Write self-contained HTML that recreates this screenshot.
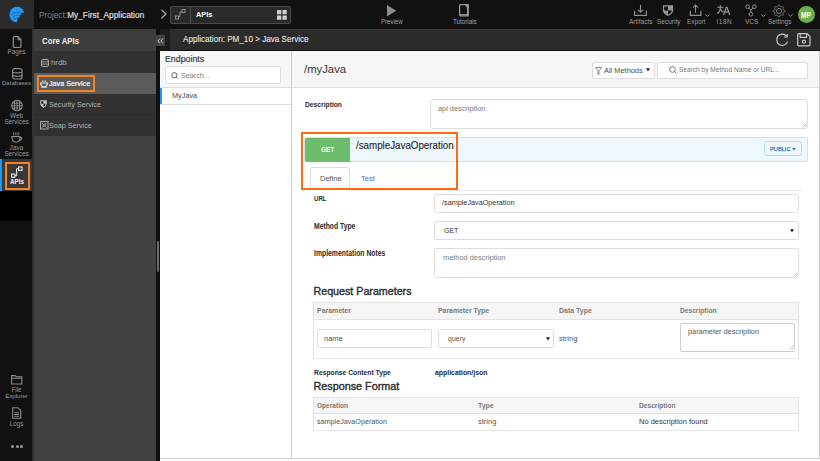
<!DOCTYPE html>
<html><head><meta charset="utf-8">
<style>
*{margin:0;padding:0;box-sizing:border-box}
html,body{width:820px;height:461px;overflow:hidden;background:#fff;font-family:"Liberation Sans",sans-serif}
.a{position:absolute}
.t{position:absolute;white-space:nowrap;line-height:1}
svg{position:absolute;overflow:visible}
</style></head><body>

<!-- top bar -->
<div class="a" style="left:0;top:0;width:820px;height:29px;background:#111"></div>
<div class="a" style="left:0;top:0;width:34px;height:29px;background:#2b2b2b"></div>
<svg style="left:0;top:0" width="34" height="29" viewBox="0 0 34 29"><path d="M17.2 22.2 Q12.5 22.5 10.3 18.6 Q8.6 15 10.2 11.2 Q12.2 7 16.8 6.8 Q21.4 6.8 23.9 11.2 L24 12.6 L20.9 13 L21.9 14.4 L19.3 15.2 L20.1 16.7 L17.6 17.9 Z" fill="#2196f3"/><path d="M11.2 14.6 Q14.5 11.4 20.9 13 M12.4 17.6 Q15.2 14.4 19.3 15.2 M14 20.4 Q15.4 17.4 17.6 17.9" fill="none" stroke="#166ab8" stroke-width="0.9"/></svg>
<div class="t" style="left:39px;top:10.6px;font-size:8.3px;color:#808080">Project:<span style="color:#e0e0e0;-webkit-text-stroke:0.15px #e0e0e0">My_First_Application</span></div>
<svg style="left:160px;top:9px" width="8" height="10" viewBox="0 0 8 10"><path d="M1.5 0.8 L6 5 L1.5 9.2" fill="none" stroke="#aaa" stroke-width="1.3"/></svg>

<div class="a" style="left:170px;top:6px;width:121px;height:18px;border:1px solid #4a4a4a;border-radius:2px;background:#2a2a2a"></div>
<div class="a" style="left:190px;top:7px;width:1px;height:16px;background:#4a4a4a"></div>
<svg style="left:175px;top:9px" width="11" height="11" viewBox="0 0 11 11"><rect x="0.5" y="7" width="3" height="3" fill="none" stroke="#999" stroke-width="0.9"/><rect x="7" y="0.5" width="3" height="3" fill="none" stroke="#999" stroke-width="0.9"/><path d="M3.5 7.5 L5 7.5 L5 3 L7 3" fill="none" stroke="#999" stroke-width="0.9"/></svg>
<div class="t" style="left:196px;top:11px;font-size:7.3px;font-weight:bold;color:#fff">APIs</div>
<svg style="left:277px;top:10px" width="10" height="10" viewBox="0 0 10 10"><path d="M0 0 H4.3 V4.3 H0Z M5.5 0 H9.8 V4.3 H5.5Z M0 5.5 H4.3 V9.8 H0Z M5.5 5.5 H9.8 V9.8 H5.5Z" fill="#cfcfcf"/></svg>

<!-- preview / tutorials -->
<svg style="left:387px;top:4.8px" width="10" height="12" viewBox="0 0 10 12"><path d="M0 0 L9.2 5.7 L0 11.4Z" fill="#8c8c8c"/></svg>
<div class="t" style="left:381px;top:18.5px;font-size:6.8px;color:#a4a4a4;transform:scaleX(0.89);transform-origin:0 0">Preview</div>
<svg style="left:459px;top:4px" width="11" height="13" viewBox="0 0 11 13"><path d="M0.6 1.4 Q0.6 0.6 1.4 0.6 L6.3 0.6 L7.8 2.3 L7.8 0.6 L9.2 0.6 L9.2 12 L1.4 12 Q0.6 12 0.6 11.2Z" fill="none" stroke="#9a9a9a" stroke-width="1.2"/><path d="M1 10.9 L9 10.9" stroke="#9a9a9a" stroke-width="1.6"/><path d="M8.6 1 L8.6 11.5" stroke="#9a9a9a" stroke-width="1.3"/></svg>
<div class="t" style="left:453px;top:18.5px;font-size:6.8px;color:#a4a4a4;transform:scaleX(0.92);transform-origin:0 0">Tutorials</div>

<!-- right toolbar -->

<!-- toolbar icons -->
<svg style="left:633px;top:4px" width="15" height="13" viewBox="0 0 15 13"><path d="M7.5 0.8 L7.5 8.2 M5 5.8 L7.5 8.3 L10 5.8" fill="none" stroke="#8e8e8e" stroke-width="1.1"/><path d="M1.6 6.8 L1.6 11.4 L13.4 11.4 L13.4 6.8" fill="none" stroke="#8e8e8e" stroke-width="1.2"/></svg>
<svg style="left:662px;top:4px" width="12" height="13" viewBox="0 0 12 13"><path d="M0.9 1.2 L11.1 1.2 L11.1 6 Q11 10 6 12 Q1 10 0.9 6Z" fill="#969696"/><path d="M2.2 2.5 L6 2.5 L6 6.6 L2.2 6.6Z M6 6.6 L9.8 6.6 Q9.5 9.4 6 10.8Z" fill="#111"/></svg>
<svg style="left:689px;top:4px" width="14" height="13" viewBox="0 0 14 13"><path d="M6.5 8.8 L6.5 1.2 M4 3.6 L6.5 1.1 L9 3.6" fill="none" stroke="#8e8e8e" stroke-width="1.1"/><path d="M1.3 6.8 L1.3 11.4 L11.9 11.4 L11.9 6.8" fill="none" stroke="#8e8e8e" stroke-width="1.2"/></svg>
<svg style="left:704px;top:13px" width="7" height="5" viewBox="0 0 7 5"><path d="M1.2 1.4 L3.4 3.5 L5.6 1.4" fill="none" stroke="#8e8e8e" stroke-width="0.9"/></svg>
<svg style="left:716px;top:4px" width="15" height="12" viewBox="0 0 15 12"><path d="M1.2 3.3 L7.4 3.3 M4.3 1 L4.3 4.5 Q4 8 1.2 9.5 M4.4 5 Q5.5 7.6 7.8 8.3" fill="none" stroke="#969696" stroke-width="1.1"/><path d="M7.6 11 L10.3 3.3 L11 3.3 L13.7 11 M8.6 8.2 L12.7 8.2" fill="none" stroke="#969696" stroke-width="1.2"/></svg>
<svg style="left:744px;top:3px" width="14" height="14" viewBox="0 0 14 14"><circle cx="3.6" cy="3.7" r="1.9" fill="none" stroke="#8e8e8e" stroke-width="1"/><circle cx="10.3" cy="3.7" r="1.9" fill="none" stroke="#8e8e8e" stroke-width="1"/><circle cx="6.9" cy="11.2" r="1.9" fill="none" stroke="#8e8e8e" stroke-width="1"/><path d="M4.8 5.2 L6.9 6.8 L9.1 5.2 M6.9 6.8 L6.9 9.3" fill="none" stroke="#8e8e8e" stroke-width="1"/></svg>
<svg style="left:759.5px;top:13px" width="7" height="5" viewBox="0 0 7 5"><path d="M1.2 1.4 L3.4 3.5 L5.6 1.4" fill="none" stroke="#8e8e8e" stroke-width="0.9"/></svg>
<svg style="left:772px;top:4px" width="14" height="14" viewBox="-7 -7 14 14"><path d="M5.96 0.00 L5.95 0.16 L5.92 0.31 L5.86 0.46 L5.77 0.61 L5.66 0.74 L5.51 0.87 L5.31 0.98 L4.89 1.04 L4.69 1.13 L4.54 1.22 L4.41 1.31 L4.30 1.40 L4.22 1.49 L4.15 1.59 L4.10 1.70 L4.06 1.81 L4.04 1.93 L4.03 2.05 L4.04 2.19 L4.07 2.35 L4.11 2.52 L4.20 2.72 L4.45 3.06 L4.51 3.28 L4.53 3.47 L4.51 3.65 L4.47 3.81 L4.40 3.96 L4.32 4.10 L4.22 4.22 L4.10 4.32 L3.96 4.40 L3.81 4.47 L3.65 4.51 L3.47 4.53 L3.28 4.51 L3.06 4.45 L2.72 4.20 L2.52 4.11 L2.35 4.07 L2.19 4.04 L2.05 4.03 L1.93 4.04 L1.81 4.06 L1.70 4.10 L1.59 4.15 L1.49 4.22 L1.40 4.30 L1.31 4.41 L1.22 4.54 L1.13 4.69 L1.04 4.89 L0.98 5.31 L0.87 5.51 L0.74 5.66 L0.61 5.77 L0.46 5.86 L0.31 5.92 L0.16 5.95 L0.00 5.96 L-0.16 5.95 L-0.31 5.92 L-0.46 5.86 L-0.61 5.77 L-0.74 5.66 L-0.87 5.51 L-0.98 5.31 L-1.04 4.89 L-1.13 4.69 L-1.22 4.54 L-1.31 4.41 L-1.40 4.30 L-1.49 4.22 L-1.59 4.15 L-1.70 4.10 L-1.81 4.06 L-1.93 4.04 L-2.05 4.03 L-2.19 4.04 L-2.35 4.07 L-2.52 4.11 L-2.72 4.20 L-3.06 4.45 L-3.28 4.51 L-3.47 4.53 L-3.65 4.51 L-3.81 4.47 L-3.96 4.40 L-4.10 4.32 L-4.22 4.22 L-4.32 4.10 L-4.40 3.96 L-4.47 3.81 L-4.51 3.65 L-4.53 3.47 L-4.51 3.28 L-4.45 3.06 L-4.20 2.72 L-4.11 2.52 L-4.07 2.35 L-4.04 2.19 L-4.03 2.05 L-4.04 1.93 L-4.06 1.81 L-4.10 1.70 L-4.15 1.59 L-4.22 1.49 L-4.30 1.40 L-4.41 1.31 L-4.54 1.22 L-4.69 1.13 L-4.89 1.04 L-5.31 0.98 L-5.51 0.87 L-5.66 0.74 L-5.77 0.61 L-5.86 0.46 L-5.92 0.31 L-5.95 0.16 L-5.96 0.00 L-5.95 -0.16 L-5.92 -0.31 L-5.86 -0.46 L-5.77 -0.61 L-5.66 -0.74 L-5.51 -0.87 L-5.31 -0.98 L-4.89 -1.04 L-4.69 -1.13 L-4.54 -1.22 L-4.41 -1.31 L-4.30 -1.40 L-4.22 -1.49 L-4.15 -1.59 L-4.10 -1.70 L-4.06 -1.81 L-4.04 -1.93 L-4.03 -2.05 L-4.04 -2.19 L-4.07 -2.35 L-4.11 -2.52 L-4.20 -2.72 L-4.45 -3.06 L-4.51 -3.28 L-4.53 -3.47 L-4.51 -3.65 L-4.47 -3.81 L-4.40 -3.96 L-4.32 -4.10 L-4.22 -4.22 L-4.10 -4.32 L-3.96 -4.40 L-3.81 -4.47 L-3.65 -4.51 L-3.47 -4.53 L-3.28 -4.51 L-3.06 -4.45 L-2.72 -4.20 L-2.52 -4.11 L-2.35 -4.07 L-2.19 -4.04 L-2.05 -4.03 L-1.93 -4.04 L-1.81 -4.06 L-1.70 -4.10 L-1.59 -4.15 L-1.49 -4.22 L-1.40 -4.30 L-1.31 -4.41 L-1.22 -4.54 L-1.13 -4.69 L-1.04 -4.89 L-0.98 -5.31 L-0.87 -5.51 L-0.74 -5.66 L-0.61 -5.77 L-0.46 -5.86 L-0.31 -5.92 L-0.16 -5.95 L-0.00 -5.96 L0.16 -5.95 L0.31 -5.92 L0.46 -5.86 L0.61 -5.77 L0.74 -5.66 L0.87 -5.51 L0.98 -5.31 L1.04 -4.89 L1.13 -4.69 L1.22 -4.54 L1.31 -4.41 L1.40 -4.30 L1.49 -4.22 L1.59 -4.15 L1.70 -4.10 L1.81 -4.06 L1.93 -4.04 L2.05 -4.03 L2.19 -4.04 L2.35 -4.07 L2.52 -4.11 L2.72 -4.20 L3.06 -4.45 L3.28 -4.51 L3.47 -4.53 L3.65 -4.51 L3.81 -4.47 L3.96 -4.40 L4.10 -4.32 L4.22 -4.22 L4.32 -4.10 L4.40 -3.96 L4.47 -3.81 L4.51 -3.65 L4.53 -3.47 L4.51 -3.28 L4.45 -3.06 L4.20 -2.72 L4.11 -2.52 L4.07 -2.35 L4.04 -2.19 L4.03 -2.05 L4.04 -1.93 L4.06 -1.81 L4.10 -1.70 L4.15 -1.59 L4.22 -1.49 L4.30 -1.40 L4.41 -1.31 L4.54 -1.22 L4.69 -1.13 L4.89 -1.04 L5.31 -0.98 L5.51 -0.87 L5.66 -0.74 L5.77 -0.61 L5.86 -0.46 L5.92 -0.31 L5.95 -0.16 L5.96 -0.00Z" fill="none" stroke="#8e8e8e" stroke-width="0.85"/><circle cx="0" cy="0" r="2.6" fill="none" stroke="#8e8e8e" stroke-width="0.85"/></svg>
<svg style="left:787px;top:13px" width="7" height="5" viewBox="0 0 7 5"><path d="M1.2 1.4 L3.4 3.5 L5.6 1.4" fill="none" stroke="#8e8e8e" stroke-width="0.9"/></svg>

<div class="t" style="left:629px;top:19px;font-size:6.5px;color:#9c9c9c">Artifacts</div>
<div class="t" style="left:657px;top:19px;font-size:6.5px;color:#9c9c9c">Security</div>
<div class="t" style="left:687px;top:19px;font-size:6.4px;color:#9c9c9c">Export</div>
<div class="t" style="left:716.5px;top:19px;font-size:6.5px;letter-spacing:0.5px;color:#9c9c9c">I18N</div>
<div class="t" style="left:745px;top:19px;font-size:6.5px;color:#9c9c9c">VCS</div>
<div class="t" style="left:768px;top:19px;font-size:6.5px;color:#9c9c9c">Settings</div>
<div class="a" style="left:798px;top:6px;width:16.8px;height:16.8px;border-radius:50%;background:#6cb04c"></div>
<div class="t" style="left:800.6px;top:11px;font-size:8.4px;font-weight:bold;color:#fff;transform:scaleX(0.78);transform-origin:0 0">MP</div>

<!-- left rail -->
<div class="a" style="left:0;top:29px;width:32px;height:432px;background:#111"></div>
<div class="a" style="left:0;top:159px;width:33px;height:32px;background:#383838"></div>
<div class="a" style="left:0;top:159px;width:1.5px;height:32px;background:#2196f3"></div>
<div class="a" style="left:5px;top:162px;width:25px;height:28px;border:2px solid #f58220"></div>
<div class="a" style="left:0;top:191px;width:33px;height:30px;background:#000"></div>


<!-- rail icons -->
<svg style="left:12px;top:36px" width="10" height="12" viewBox="0 0 10 12"><path d="M1.3 1.6 Q1.3 0.7 2.2 0.7 L6.3 0.7 L8.9 3.4 L8.9 10.4 Q8.9 11.3 8 11.3 L2.2 11.3 Q1.3 11.3 1.3 10.4Z M6.1 0.9 L6.1 3.6 L8.8 3.6" fill="none" stroke="#8c8c8c" stroke-width="1.2"/></svg>
<div class="t" style="left:0;width:33px;text-align:center;top:49px;font-size:6.3px;color:#9a9a9a">Pages</div>
<svg style="left:12px;top:68px" width="11" height="12" viewBox="0 0 11 12"><rect x="0.7" y="0.7" width="9.3" height="10.3" rx="2" fill="none" stroke="#8c8c8c" stroke-width="1.2"/><path d="M0.8 4.2 Q5.35 5.6 9.9 4.2 M0.8 7.6 Q5.35 9 9.9 7.6" fill="none" stroke="#8c8c8c" stroke-width="1.1"/></svg>
<div class="t" style="left:0;width:33px;text-align:center;top:80px;font-size:6.1px;color:#9a9a9a">Databases</div>
<svg style="left:11px;top:100px" width="12" height="12" viewBox="0 0 12 12"><circle cx="6" cy="5.6" r="5.2" fill="none" stroke="#8c8c8c" stroke-width="1.1"/><path d="M3.5 1 L3.5 10.5 M6 0.5 L6 10.8 M8.5 1 L8.5 10.5 M1 3.2 L11 3.2 M0.6 5.6 L11.4 5.6 M1 8 L11 8" stroke="#8c8c8c" stroke-width="0.9"/></svg>
<div class="t" style="left:0;width:33px;text-align:center;top:112.7px;font-size:6.3px;color:#9a9a9a">Web</div>
<div class="t" style="left:0;width:33px;text-align:center;top:118.7px;font-size:6.3px;color:#9a9a9a">Services</div>
<svg style="left:11px;top:132px" width="12" height="11" viewBox="0 0 12 11"><path d="M2.6 0.3 L2.6 3.3 M4.3 0.3 L4.3 3.3 M6 0.3 L6 3.3 M7.7 0.3 L7.7 3.3" stroke="#8a8a8a" stroke-width="0.8"/><path d="M0.8 4.6 L9.2 4.6 Q9 10.2 5 10.2 Q1 10.2 0.8 4.6Z M9.2 5.4 Q11 5.4 10.6 7 Q10.2 8.2 8.6 8" fill="none" stroke="#8c8c8c" stroke-width="1.1"/></svg>
<div class="t" style="left:0;width:33px;text-align:center;top:144.6px;font-size:6.3px;color:#9a9a9a">Java</div>
<div class="t" style="left:0;width:33px;text-align:center;top:150.6px;font-size:6.3px;color:#9a9a9a">Services</div>
<svg style="left:11px;top:166px" width="12" height="12" viewBox="0 0 12 12"><rect x="0.6" y="8.1" width="3.2" height="3.2" fill="none" stroke="#eee" stroke-width="1.1"/><rect x="7.6" y="1" width="3.4" height="3.4" fill="none" stroke="#eee" stroke-width="1.1"/><path d="M3.8 9.7 L5.6 9.7 L5.6 2.7 L7.6 2.7" fill="none" stroke="#eee" stroke-width="1"/></svg>
<div class="t" style="left:0;width:34px;text-align:center;top:179px;font-size:6.3px;font-weight:bold;color:#f2f2f2">APIs</div>
<svg style="left:11px;top:375px" width="12" height="10" viewBox="0 0 12 10"><path d="M0.6 0.6 L4.2 0.6 L5.2 1.8 L10.8 1.8 L10.8 9 L0.6 9Z M0.6 3.3 L10.8 3.3" fill="none" stroke="#8c8c8c" stroke-width="1.1"/></svg>
<div class="t" style="left:0;width:33px;text-align:center;top:386.6px;font-size:6.3px;color:#9a9a9a">File</div>
<div class="t" style="left:0;width:33px;text-align:center;top:392.8px;font-size:6.1px;color:#9a9a9a">Explorer</div>
<svg style="left:12px;top:407px" width="10" height="12" viewBox="0 0 10 12"><path d="M0.7 0.7 L6 0.7 L8.7 3.4 L8.7 11.2 L0.7 11.2Z M2.4 5.8 L7 5.8 M2.4 7.5 L7 7.5 M2.4 9.2 L7 9.2" fill="none" stroke="#8c8c8c" stroke-width="1.1"/></svg>
<div class="t" style="left:0;width:33px;text-align:center;top:421px;font-size:6.3px;color:#9a9a9a">Logs</div>
<div class="a" style="left:11px;top:445px;width:3.4px;height:3.4px;border-radius:50%;background:#9a9a9a"></div>
<div class="a" style="left:15.5px;top:445px;width:3.4px;height:3.4px;border-radius:50%;background:#9a9a9a"></div>
<div class="a" style="left:20px;top:445px;width:3.4px;height:3.4px;border-radius:50%;background:#9a9a9a"></div>

<!-- core apis panel -->
<div class="a" style="left:32px;top:29px;width:124px;height:432px;background:#424242"></div>
<div class="a" style="left:32px;top:29px;width:124px;height:22px;background:#3d3d3d"></div>
<div class="a" style="left:32px;top:51px;width:124px;height:22px;background:#313131"></div>
<div class="a" style="left:32px;top:73px;width:124px;height:21px;background:#5b5b5b"></div>
<div class="a" style="left:32px;top:94px;width:124px;height:21px;background:#313131"></div>
<div class="a" style="left:32px;top:115px;width:124px;height:21px;background:#313131"></div>
<div class="a" style="left:34px;top:114px;width:122px;height:1px;background:#2c2c2c"></div>
<div class="a" style="left:32px;top:29px;width:2px;height:432px;background:#333"></div>
<div class="t" style="left:41.7px;top:36.8px;font-size:9.3px;font-weight:bold;color:#f0f0f0;transform:scaleX(0.84);transform-origin:0 0">Core APIs</div>
<div class="t" style="left:51px;top:59px;font-size:7.8px;color:#b4b4b4">hrdb</div>
<div class="a" style="left:37px;top:74.5px;width:58.3px;height:17.3px;border:2px solid #f58220"></div>
<div class="t" style="left:49px;top:80px;font-size:7.2px;color:#fff;-webkit-text-stroke:0.15px #fff">Java Service</div>
<div class="t" style="left:49px;top:101px;font-size:7.2px;color:#b4b4b4">Security Service</div>
<div class="t" style="left:49px;top:122px;font-size:7.2px;color:#b4b4b4">Soap Service</div>

<!-- divider + collapse -->
<div class="a" style="left:156px;top:29px;width:4px;height:432px;background:#111"></div>
<div class="a" style="left:156.5px;top:241px;width:2.5px;height:31px;background:#6a6a6a;border-radius:1.5px"></div>

<!-- breadcrumb -->
<div class="a" style="left:160px;top:29px;width:660px;height:21px;background:#1c1c1c"></div>
<div class="a" style="left:170px;top:29px;width:650px;height:21px;background:#2b2b2b"></div>
<div class="a" style="left:160px;top:50px;width:660px;height:1px;background:#111"></div>
<div class="a" style="left:170px;top:29px;width:650px;height:1px;background:#343434"></div>
<svg style="left:775px;top:33px" width="15" height="14" viewBox="0 0 15 14"><path d="M11.6 3.2 A5.6 5.6 0 1 0 12.6 8.6" fill="none" stroke="#c8c8c8" stroke-width="1.2"/><path d="M12.2 1 L12.2 4 L9 4" fill="none" stroke="#c8c8c8" stroke-width="1.2"/></svg>
<svg style="left:797px;top:33px" width="14" height="14" viewBox="0 0 14 14"><path d="M0.7 1.7 Q0.7 0.7 1.7 0.7 L10.2 0.7 L13 3.5 L13 11.8 Q13 12.8 12 12.8 L1.7 12.8 Q0.7 12.8 0.7 11.8Z" fill="none" stroke="#c8c8c8" stroke-width="1.2"/><path d="M3.2 0.8 L3.2 4.4 L9.6 4.4 L9.6 0.8" fill="none" stroke="#c8c8c8" stroke-width="1.1"/><circle cx="6.9" cy="8.7" r="1.6" fill="none" stroke="#c8c8c8" stroke-width="1.1"/></svg>
<div class="t" style="left:183px;top:34px;font-size:9.8px;color:#e8e8e8;-webkit-text-stroke:0.1px #e8e8e8;transform:scaleX(0.828);transform-origin:0 0">Application: PM_10 &gt; Java Service</div>


<svg style="left:41px;top:58.5px" width="8" height="8" viewBox="0 0 8 8"><rect x="0.5" y="0.5" width="7" height="7" rx="1.5" fill="none" stroke="#aaa" stroke-width="1"/><path d="M0.8 2.9 L7.2 2.9 M0.8 5.1 L7.2 5.1" stroke="#aaa" stroke-width="0.9"/></svg>
<svg style="left:39.5px;top:79.5px" width="8" height="8" viewBox="0 0 8 8"><path d="M2.5 0.5 L2.5 2 M4 0.5 L4 2 M5.5 0.5 L5.5 2" stroke="#ddd" stroke-width="0.8"/><path d="M0.6 3 L7.4 3 Q7.3 6.8 4 6.8 Q0.7 6.8 0.6 3Z" fill="none" stroke="#eee" stroke-width="1.1"/><path d="M1 7.4 L7 7.4" stroke="#ddd" stroke-width="0.8"/></svg>
<svg style="left:40px;top:100px" width="7" height="8" viewBox="0 0 7 8"><path d="M0.2 0.3 L6.8 0.3 L6.8 3.8 Q6.6 6.6 3.5 7.9 Q0.4 6.6 0.2 3.8Z" fill="#c8c8c8"/><path d="M1.2 1.2 L3.5 1.2 L3.5 3.7 L1.2 3.7Z M3.5 3.7 L5.8 3.7 Q5.6 5.8 3.5 6.8Z" fill="#222"/></svg>
<svg style="left:39.5px;top:120.8px" width="8.5" height="8.5" viewBox="0 0 8.5 8.5"><rect x="0.5" y="0.5" width="7.5" height="7.5" fill="none" stroke="#aaa" stroke-width="1"/><path d="M1.8 1.8 L6.7 6.7 M6.7 1.8 L1.8 6.7" stroke="#999" stroke-width="1"/><circle cx="4.25" cy="4.25" r="1.4" fill="none" stroke="#999" stroke-width="0.7"/></svg>
<div class="a" style="left:156px;top:35px;width:9px;height:11px;background:#424242"></div>
<svg style="left:157px;top:37.5px" width="7" height="6" viewBox="0 0 7 6"><path d="M3 0.6 L0.8 3 L3 5.4 M6 0.6 L3.8 3 L6 5.4" fill="none" stroke="#c8c8c8" stroke-width="1"/></svg>

<!-- endpoints panel -->
<div class="a" style="left:160px;top:51px;width:132px;height:407px;background:#fff;border-right:1px solid #ccc"></div>
<div class="a" style="left:160px;top:51px;width:131px;height:37px;background:#f6f6f6;border-bottom:1px solid #ddd"></div>
<div class="t" style="left:165px;top:55px;font-size:8.8px;color:#333;-webkit-text-stroke:0.15px #333">Endpoints</div>
<div class="a" style="left:165px;top:66px;width:116px;height:18px;background:#fff;border:1px solid #ddd;border-radius:2px"></div>
<svg style="left:171px;top:71.5px" width="8" height="7" viewBox="0 0 8 7"><circle cx="3.3" cy="3.2" r="2.6" fill="none" stroke="#555" stroke-width="0.9"/><path d="M5 5 L6.6 6.5" stroke="#555" stroke-width="0.9"/></svg>
<div class="t" style="left:181px;top:71.5px;font-size:7.2px;color:#7a7a7a">Search...</div>
<div class="a" style="left:160px;top:104px;width:131px;height:1px;background:#ddd"></div>
<div class="a" style="left:160px;top:88px;width:2px;height:16px;background:#2196f3"></div>
<div class="t" style="left:172px;top:92px;font-size:7.3px;color:#4a4a4a">MyJava</div>

<!-- main -->
<div class="a" style="left:292px;top:51px;width:528px;height:407px;background:#fff;border-right:1px solid #ccc"></div>
<div class="a" style="left:292px;top:51px;width:527px;height:37px;background:#f6f6f6;border-bottom:1px solid #ddd"></div>
<div class="a" style="left:160px;top:458px;width:660px;height:1px;background:#ccc"></div>
<div class="t" style="left:304px;top:63.6px;font-size:11.3px;color:#3a3a3a;-webkit-text-stroke:0.05px #3a3a3a">/myJava</div>


<!-- header controls -->
<div class="a" style="left:592px;top:62px;width:63px;height:17px;background:#fff;border:1px solid #ddd;border-radius:2px"></div>
<svg style="left:595px;top:67px" width="7" height="8" viewBox="0 0 7 8"><path d="M0.5 0.6 L6.5 0.6 L4 3.8 L4 7.4 L3 7.4 L3 3.8Z" fill="none" stroke="#666" stroke-width="0.75"/></svg>
<div class="t" style="left:604.3px;top:66.8px;font-size:8.1px;color:#4a4a4a;transform:scaleX(0.915);transform-origin:0 0">All Methods</div>
<svg style="left:646px;top:68px" width="4" height="4" viewBox="0 0 4 4"><path d="M0 0.3 L4 0.3 L2 3.6Z" fill="#222"/></svg>
<div class="a" style="left:657px;top:62px;width:151px;height:17px;background:#fff;border:1px solid #ddd;border-radius:2px"></div>
<svg style="left:669px;top:66px" width="8" height="8" viewBox="0 0 8 8"><circle cx="3.5" cy="3.5" r="2.8" fill="none" stroke="#666" stroke-width="0.9"/><path d="M5.5 5.5 L7.5 7.5" stroke="#666" stroke-width="0.9"/></svg>
<div class="t" style="left:679px;top:67px;font-size:6.55px;color:#777">Search by Method Name or URL...</div>

<div class="t" style="left:304.5px;top:101px;font-size:8.1px;font-weight:bold;color:#2a2a2a;transform:scaleX(0.83);transform-origin:0 0">Description</div>
<div class="a" style="left:430px;top:99px;width:378px;height:30px;background:#fff;border:1px solid #ddd;border-radius:3px"></div>
<svg style="left:802px;top:123px" width="5" height="5" viewBox="0 0 5 5"><path d="M4.5 0.5 L0.5 4.5 M4.5 2.5 L2.5 4.5" stroke="#999" stroke-width="0.6"/></svg>
<div class="t" style="left:438px;top:105px;font-size:7.35px;color:#7a7a7a">api description</div>

<!-- operation bar -->
<div class="a" style="left:304px;top:137px;width:504px;height:25px;background:#eef7fd;border:1px solid #c8e4f7;border-radius:2px"></div>
<div class="a" style="left:305px;top:138px;width:45px;height:24px;background:#6bbd6a;border-radius:2px 0 0 2px"></div>
<div class="t" style="left:321px;top:146px;font-size:7.5px;font-weight:bold;color:#fff;transform:scaleX(0.86);transform-origin:0 0">GET</div>
<div class="t" style="left:356px;top:140.3px;font-size:10.6px;color:#222;-webkit-text-stroke:0.1px #222;transform:scaleX(0.922);transform-origin:0 0">/sampleJavaOperation</div>
<div class="a" style="left:764px;top:141px;width:38px;height:15px;background:#eef7fd;border:1px solid #b5dbf3;border-radius:3px"></div>
<div class="t" style="left:770px;top:146.5px;font-size:5.7px;color:#3b7fc4;-webkit-text-stroke:0.25px #3b7fc4">PUBLIC</div>
<svg style="left:791.5px;top:148px" width="4" height="3" viewBox="0 0 4 3"><path d="M0 0 L4 0 L2 2.4Z" fill="#3b7fc4"/></svg>

<!-- tabs -->
<div class="a" style="left:350px;top:190px;width:451px;height:1px;background:#e3e3e3"></div>
<div class="a" style="left:310px;top:167px;width:40px;height:24px;background:#fff;border:1px solid #ddd;border-bottom:none;border-radius:3px 3px 0 0"></div>
<div class="t" style="left:320px;top:175px;font-size:7.5px;color:#555">Define</div>
<div class="t" style="left:361px;top:175px;font-size:7.5px;color:#3a78b8">Test</div>
<div class="a" style="left:301px;top:131.5px;width:157px;height:58px;border:2px solid #ff6a10"></div>

<!-- form -->
<div class="t" style="left:314px;top:195px;font-size:7.6px;font-weight:bold;color:#2a2a2a;transform:scaleX(0.8);transform-origin:0 0">URL</div>
<div class="a" style="left:434px;top:194px;width:365px;height:19px;background:#fff;border:1px solid #ddd;border-radius:3px"></div>
<div class="t" style="left:442px;top:199px;font-size:7.26px;color:#333">/sampleJavaOperation</div>

<div class="t" style="left:314px;top:223px;font-size:8.2px;font-weight:bold;color:#2a2a2a;transform:scaleX(0.83);transform-origin:0 0">Method Type</div>
<div class="a" style="left:434px;top:221px;width:365px;height:19px;background:#fff;border:1px solid #ddd;border-radius:3px"></div>
<div class="t" style="left:444px;top:227px;font-size:7px;color:#333">GET</div>
<svg style="left:789.5px;top:228.5px" width="4" height="4" viewBox="0 0 4 4"><path d="M0 0.3 L4 0.3 L2 3.6Z" fill="#222"/></svg>

<div class="t" style="left:314px;top:250px;font-size:8.2px;font-weight:bold;color:#2a2a2a;transform:scaleX(0.835);transform-origin:0 0">Implementation Notes</div>
<div class="a" style="left:434px;top:248px;width:365px;height:30px;background:#fff;border:1px solid #ddd;border-radius:3px"></div>
<svg style="left:793px;top:272px" width="5" height="5" viewBox="0 0 5 5"><path d="M4.5 0.5 L0.5 4.5 M4.5 2.5 L2.5 4.5" stroke="#999" stroke-width="0.6"/></svg>
<div class="t" style="left:443px;top:254px;font-size:7.4px;color:#7a7a7a">method description</div>

<div class="t" style="left:313.5px;top:286px;font-size:10.7px;color:#2a2a2a;-webkit-text-stroke:0.35px #2a2a2a">Request Parameters</div>

<!-- table 1 -->
<div class="a" style="left:313px;top:302px;width:486px;height:57px;background:#fff;border:1px solid #e3e3e3"></div>
<div class="a" style="left:314px;top:303px;width:484px;height:17px;background:#f5f5f5;border-bottom:1px solid #e3e3e3"></div>
<div class="t" style="left:317px;top:307px;font-size:8px;font-weight:bold;color:#7a7a7a;transform:scaleX(0.867);transform-origin:0 0">Parameter</div>
<div class="t" style="left:438px;top:307px;font-size:8px;font-weight:bold;color:#7a7a7a;transform:scaleX(0.859);transform-origin:0 0">Parameter Type</div>
<div class="t" style="left:559px;top:307px;font-size:8px;font-weight:bold;color:#7a7a7a;transform:scaleX(0.870);transform-origin:0 0">Data Type</div>
<div class="t" style="left:680px;top:307px;font-size:8px;font-weight:bold;color:#7a7a7a;transform:scaleX(0.830);transform-origin:0 0">Description</div>
<div class="a" style="left:317px;top:329px;width:115px;height:19px;background:#fff;border:1px solid #ddd;border-radius:2px"></div>
<div class="t" style="left:324px;top:335px;font-size:7.5px;color:#555">name</div>
<div class="a" style="left:438px;top:329px;width:116px;height:19px;background:#fff;border:1px solid #ddd;border-radius:2px"></div>
<div class="t" style="left:448px;top:335px;font-size:7px;color:#555">query</div>
<svg style="left:545.5px;top:336.5px" width="4" height="4" viewBox="0 0 4 4"><path d="M0 0.3 L4 0.3 L2 3.6Z" fill="#222"/></svg>
<div class="t" style="left:559px;top:335px;font-size:7.5px;color:#555">string</div>
<div class="a" style="left:680px;top:323px;width:115px;height:29px;background:#fff;border:1px solid #ccc;border-radius:2px"></div>
<svg style="left:789px;top:345px" width="5" height="5" viewBox="0 0 5 5"><path d="M4.5 0.5 L0.5 4.5 M4.5 2.5 L2.5 4.5" stroke="#999" stroke-width="0.6"/></svg>
<div class="t" style="left:688px;top:328px;font-size:7.35px;color:#555">parameter description</div>

<div class="t" style="left:314px;top:369px;font-size:8px;font-weight:bold;color:#2a2a2a;transform:scaleX(0.845);transform-origin:0 0">Response Content Type</div>
<div class="t" style="left:435px;top:369px;font-size:8px;font-weight:bold;color:#2a2a2a;transform:scaleX(0.86);transform-origin:0 0">application/json</div>
<div class="t" style="left:313.5px;top:380.7px;font-size:10.8px;color:#2a2a2a;-webkit-text-stroke:0.35px #2a2a2a">Response Format</div>

<!-- table 2 -->
<div class="a" style="left:313px;top:397px;width:486px;height:34px;background:#fff;border:1px solid #e3e3e3"></div>
<div class="a" style="left:314px;top:398px;width:484px;height:16px;background:#f5f5f5;border-bottom:1px solid #e3e3e3"></div>
<div class="t" style="left:317px;top:401.6px;font-size:8px;font-weight:bold;color:#7a7a7a;transform:scaleX(0.821);transform-origin:0 0">Operation</div>
<div class="t" style="left:478px;top:401.6px;font-size:8px;font-weight:bold;color:#7a7a7a;transform:scaleX(0.867);transform-origin:0 0">Type</div>
<div class="t" style="left:639px;top:401.6px;font-size:8px;font-weight:bold;color:#7a7a7a;transform:scaleX(0.830);transform-origin:0 0">Description</div>
<div class="t" style="left:317px;top:418px;font-size:7.2px;color:#555">sampleJavaOperation</div>
<div class="t" style="left:478px;top:418px;font-size:7.5px;color:#555">string</div>
<div class="t" style="left:639px;top:418px;font-size:7.5px;color:#333">No description found</div>

</body></html>
